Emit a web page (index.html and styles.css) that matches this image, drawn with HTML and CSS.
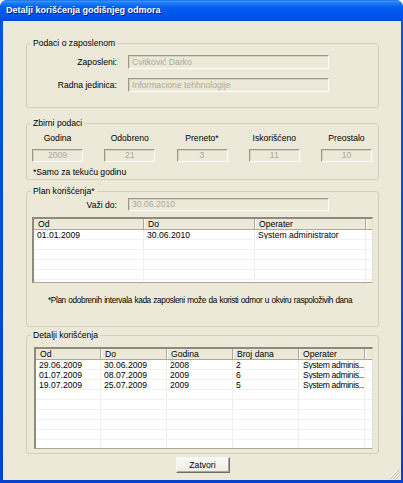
FILE: index.html
```html
<!DOCTYPE html>
<html>
<head>
<meta charset="utf-8">
<link rel="stylesheet" href="styles.css">
</head>
<body>
<div class="window">
  <div class="titlebar"><span class="title">Detalji korišćenja godišnjeg odmora</span></div>
  <div class="client">
    <section class="group g1">
      <div class="legend">Podaci o zaposlenom</div>
      <div class="field f1"><span class="lbl">Zaposleni:</span><div class="input wide">Cvitković Darko</div></div>
      <div class="field f2"><span class="lbl">Radna jedinica:</span><div class="input wide">Informacione tehhnologije</div></div>
    </section>

    <section class="group g2">
      <div class="legend">Zbirni podaci</div>
      <div class="sums heads">
        <span>Godina</span><span>Odobreno</span><span>Preneto*</span><span>Iskorišćeno</span><span>Preostalo</span>
      </div>
      <div class="sums vals">
        <div class="input num">2009</div><div class="input num">21</div><div class="input num">3</div><div class="input num">11</div><div class="input num">10</div>
      </div>
      <div class="note1">*Samo za tekuću godinu</div>
    </section>

    <section class="group g3">
      <div class="legend">Plan korišćenja*</div>
      <div class="field f3"><span class="lbl">Važi do:</span><div class="input wide">30.06.2010</div></div>
      <div class="list plan">
        <div class="row head"><span>Od</span><span>Do</span><span>Operater</span><span></span></div>
        <div class="row"><span>01.01.2009</span><span>30.06.2010</span><span>System administrator</span><span></span></div>
        <div class="row"><span></span><span></span><span></span><span></span></div>
        <div class="row"><span></span><span></span><span></span><span></span></div>
        <div class="row"><span></span><span></span><span></span><span></span></div>
        <div class="row"><span></span><span></span><span></span><span></span></div>
        <div class="row"><span></span><span></span><span></span><span></span></div>
      </div>
      <div class="note2">*Plan odobrenih intervala kada zaposleni može da koristi odmor u okviru raspoloživih dana</div>
    </section>

    <section class="group g4">
      <div class="legend">Detalji korišćenja</div>
      <div class="list det">
        <div class="row head"><span>Od</span><span>Do</span><span>Godina</span><span>Broj dana</span><span>Operater</span><span></span></div>
        <div class="row"><span>29.06.2009</span><span>30.06.2009</span><span>2008</span><span>2</span><span class="trunc">System adminis...</span><span></span></div>
        <div class="row"><span>01.07.2009</span><span>08.07.2009</span><span>2009</span><span>6</span><span class="trunc">System adminis...</span><span></span></div>
        <div class="row"><span>19.07.2009</span><span>25.07.2009</span><span>2009</span><span>5</span><span class="trunc">System adminis...</span><span></span></div>
        <div class="row"><span></span><span></span><span></span><span></span><span></span><span></span></div>
        <div class="row"><span></span><span></span><span></span><span></span><span></span><span></span></div>
        <div class="row"><span></span><span></span><span></span><span></span><span></span><span></span></div>
        <div class="row"><span></span><span></span><span></span><span></span><span></span><span></span></div>
        <div class="row"><span></span><span></span><span></span><span></span><span></span><span></span></div>
        <div class="row"><span></span><span></span><span></span><span></span><span></span><span></span></div>
        <div class="row"><span></span><span></span><span></span><span></span><span></span><span></span></div>
      </div>
    </section>

    <div class="footer"><button class="btn">Zatvori</button></div>

    <svg class="grip" width="11" height="11" viewBox="0 0 11 11">
      <path d="M10 1 L1 10 M10 4 L4 10 M10 7 L7 10" stroke="#FFFFFF" stroke-width="1"/>
      <path d="M10.5 1.5 L1.5 10.5 M10.5 4.5 L4.5 10.5 M10.5 7.5 L7.5 10.5" stroke="#B5B19E" stroke-width="1"/>
    </svg>
  </div>
</div>
</body>
</html>
```

FILE: styles.css
```css
* { box-sizing: border-box; }
html, body { margin: 0; padding: 0; }
body {
  width: 403px;
  height: 483px;
  overflow: hidden;
  background: #fff;
  font-family: "Liberation Sans", Arial, sans-serif;
  font-size: 8.6px;
  color: #000;
}
.window {
  width: 403px;
  height: 483px;
  display: flex;
  flex-direction: column;
  background: linear-gradient(to bottom, #0055EA, #0840D0);
  border-radius: 7px 7px 0 0;
}
.titlebar {
  height: 21px;
  flex: none;
  display: flex;
  align-items: center;
  padding: 0 0 1px 6px;
  border-radius: 7px 7px 0 0;
  background: linear-gradient(to bottom, #0A5FDF 0, #3D95FF 1px, #1C7CF8 3px, #0660EE 7px, #0058EE 12px, #0055EA 16px, #0050E2 19px, #0046D5 21px);
}
.title {
  color: #fff;
  font-weight: bold;
  font-size: 9px;
  text-shadow: 1px 1px #0A1883;
}
.client {
  flex: 1;
  margin: 0 2px 3px 3px;
  background: #ECE9D8;
  position: relative;
  padding-top: 22px;
  display: flex;
  flex-direction: column;
}
.group {
  margin-left: 23px;
  width: 353px;
  border: 1px solid #D0D0BF;
  border-radius: 3px;
}
.legend {
  margin: -6px 0 0 4px;
  padding: 0 2px;
  height: 11px;
  line-height: 11px;
  width: max-content;
  background: #ECE9D8;
}
.field {
  display: flex;
  align-items: center;
}
.lbl {
  width: 90px;
  text-align: right;
  margin-right: 11px;
}
.input {
  background: #ECE9D8;
  color: #ACA899;
  border-style: solid;
  border-width: 1px;
  border-color: #9C998A #FFFFFF #FFFFFF #9C998A;
  box-shadow: inset 1px 1px 0 #D6D2C2;
  white-space: nowrap;
  overflow: hidden;
}
.wide {
  width: 201px;
  height: 14px;
  line-height: 12px;
  padding-left: 3px;
}
.g1 { padding-bottom: 15px; }
.f1 { margin-top: 6px; }
.f2 { margin-top: 9px; }

.g2 { margin-top: 15px; padding-bottom: 1px; }
.sums {
  display: grid;
  grid-template-columns: repeat(5, 51px);
  column-gap: 21.25px;
  padding-left: 5px;
}
.heads { margin-top: 4px; height: 11px; line-height: 11px; text-align: center; }
.vals { margin-top: 5px; }
.num { height: 13px; line-height: 11px; text-align: center; }
.note1 { margin: 5px 0 0 6px; height: 11px; line-height: 11px; }

.g3 { margin-top: 11px; padding-bottom: 20px; }
.f3 { margin-top: 1px; }
.f3 .input { height: 13px; line-height: 11px; }
.list {
  background: #fff;
  border-style: solid;
  border-width: 2px 1px 1px 2px;
  border-color: #8E8B7C #E2DFD0 #ACA899 #8E8B7C;
  overflow: hidden;
}
.plan { margin: 6px 0 0 5px; width: 341px; height: 66px; }
.det { margin: 6px 0 0 7px; width: 339px; height: 102px; }
.row {
  display: grid;
  height: 10px;
  border-bottom: 1px solid #F1F1EE;
}
.plan .row { grid-template-columns: 110px 111px 111px 1fr; }
.det .row { grid-template-columns: 65px 66px 66px 66px 66px 1fr; }
.row span {
  padding-left: 3px;
  line-height: 10px;
  white-space: nowrap;
  overflow: hidden;
  border-right: 1px solid #EEEEEA;
}
.row span.trunc { letter-spacing: -0.35px; padding-left: 4px; }
.row span:last-child { border-right: none; }
.row.head {
  height: 11px;
  background: #ECE9D8;
  border-bottom: 1px solid #ACA899;
}
.row.head span {
  padding-left: 4px;
  line-height: 10px;
  border-right: 1px solid #ACA899;
  box-shadow: inset 1px 0 0 #fff;
}
.row.head span:first-child { box-shadow: none; }
.row.head span:last-child { border-right: none; }
.note2 {
  margin: 12px 0 0 21px;
  height: 11px;
  line-height: 11px;
  white-space: nowrap;
  font-size: 8.2px;
  letter-spacing: -0.35px;
  word-spacing: 0.6px;
}

.g4 { margin-top: 8px; padding-bottom: 4px; }

.footer {
  margin-top: 3px;
  display: flex;
  justify-content: center;
  padding-left: 1px;
}
.btn {
  width: 54px;
  height: 16px;
  padding: 0;
  font: inherit;
  color: #000;
  background: linear-gradient(to bottom, #FAFAF6, #ECEBE4);
  border-style: solid;
  border-width: 1px;
  border-color: #F8F8F4 #716F64 #716F64 #F8F8F4;
  box-shadow: inset -1px -1px 0 #ACA899;
  line-height: 13px;
}
.grip {
  position: absolute;
  right: 1px;
  bottom: 1px;
}
```
